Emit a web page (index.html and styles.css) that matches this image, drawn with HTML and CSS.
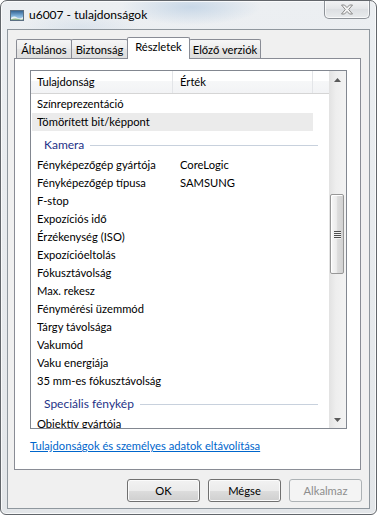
FILE: index.html
```
<!DOCTYPE html>
<html lang="hu">
<head>
<meta charset="utf-8">
<title>u6007 - tulajdonságok</title>
<link rel="stylesheet" href="styles.css">
</head>
<body>
<div class="window">
  <div class="titlebar">
    <svg class="app-icon" width="14" height="11" viewBox="0 0 14 11">
      <defs>
        <linearGradient id="sky" x1="0" y1="0" x2="0" y2="1">
          <stop offset="0" stop-color="#2f5f8e"/>
          <stop offset="0.55" stop-color="#7fb2dc"/>
          <stop offset="1" stop-color="#cfe3f2"/>
        </linearGradient>
      </defs>
      <rect x="0.5" y="0.5" width="13" height="10" fill="url(#sky)" stroke="#5b6f82"/>
      <path d="M1 8 Q4 5.5 7 7.5 T13 7 V10 H1 Z" fill="#e9f1f4"/>
      <path d="M1 9.2 Q5 7.8 9 9 T13 8.6 V10 H1 Z" fill="#8fb48a"/>
    </svg>
    <span class="title">u6007 - tulajdonságok</span>
    <div class="close">
      <svg width="14" height="11" viewBox="0 0 14 11">
        <path d="M1.5 1 H4.5 L7 3.6 L9.5 1 H12.5 L8.7 5.5 L12.5 10 H9.5 L7 7.4 L4.5 10 H1.5 L5.3 5.5 Z" fill="#f4f4f4" stroke="#8a8a8a" stroke-width="1" stroke-linejoin="round"/>
      </svg>
    </div>
  </div>
  <div class="client">
    <div class="tabs">
      <div class="tab tab-general">Általános</div>
      <div class="tab tab-security">Biztonság</div>
      <div class="tab tab-details active">Részletek</div>
      <div class="tab tab-versions">Előző verziók</div>
    </div>
    <div class="panel">
      <div class="listview">
        <div class="lv-main">
          <div class="lv-header">
            <div class="hcol hcol-name">Tulajdonság</div>
            <div class="hcol hcol-value">Érték</div>
            <div class="hfill"></div>
          </div>
          <div class="lv-body">
            <div class="row"><span class="k">Színreprezentáció</span><span class="v"></span></div>
            <div class="row selected"><span class="k">Tömörített bit/képpont</span><span class="v"></span></div>
            <div class="group"><span class="gname">Kamera</span><span class="gline"></span></div>
            <div class="row"><span class="k">Fényképezőgép gyártója</span><span class="v">CoreLogic</span></div>
            <div class="row"><span class="k">Fényképezőgép típusa</span><span class="v">SAMSUNG</span></div>
            <div class="row"><span class="k">F-stop</span><span class="v"></span></div>
            <div class="row"><span class="k">Expozíciós idő</span><span class="v"></span></div>
            <div class="row"><span class="k">Érzékenység (ISO)</span><span class="v"></span></div>
            <div class="row"><span class="k">Expozícióeltolás</span><span class="v"></span></div>
            <div class="row"><span class="k">Fókusztávolság</span><span class="v"></span></div>
            <div class="row"><span class="k">Max. rekesz</span><span class="v"></span></div>
            <div class="row"><span class="k">Fénymérési üzemmód</span><span class="v"></span></div>
            <div class="row"><span class="k">Tárgy távolsága</span><span class="v"></span></div>
            <div class="row"><span class="k">Vakumód</span><span class="v"></span></div>
            <div class="row"><span class="k">Vaku energiája</span><span class="v"></span></div>
            <div class="row"><span class="k">35 mm-es fókusztávolság</span><span class="v"></span></div>
            <div class="group"><span class="gname">Speciális fénykép</span><span class="gline"></span></div>
            <div class="row"><span class="k">Objektív gyártója</span><span class="v"></span></div>
          </div>
        </div>
        <div class="vscroll">
          <div class="sb-btn">
            <svg width="7" height="4" viewBox="0 0 7 4"><path d="M0 4 L3.5 0 L7 4 Z" fill="#5a5a5a"/></svg>
          </div>
          <div class="sb-track">
            <div class="sb-thumb">
              <div class="grip">
                <span></span><span></span><span></span><span></span>
              </div>
            </div>
          </div>
          <div class="sb-btn">
            <svg width="7" height="4" viewBox="0 0 7 4"><path d="M0 0 L7 0 L3.5 4 Z" fill="#5a5a5a"/></svg>
          </div>
        </div>
      </div>
      <a class="link" href="#">Tulajdonságok és személyes adatok eltávolítása</a>
    </div>
    <div class="buttons">
      <div class="btn">OK</div>
      <div class="btn">Mégse</div>
      <div class="btn disabled">Alkalmaz</div>
    </div>
  </div>
</div>
</body>
</html>
```
FILE: styles.css
```
* { box-sizing: border-box; }

html, body {
  margin: 0;
  padding: 0;
  background: #ffffff;
}

body {
  font-family: "Lato", "Liberation Sans", sans-serif;
  font-size: 11.2px;
  color: #000;
}

.window {
  width: 377px;
  height: 515px;
  border: 1px solid #62666b;
  border-radius: 7px 7px 6px 6px;
  background:
    radial-gradient(ellipse 70px 18px at 190px 6px, rgba(170, 196, 222, 0.55), rgba(170, 196, 222, 0)),
    radial-gradient(ellipse 60px 14px at 80px 26px, rgba(190, 208, 226, 0.35), rgba(190, 208, 226, 0)),
    linear-gradient(to bottom, #eceff2, #e3e6e9);
  box-shadow: inset 0 0 0 1px rgba(255, 255, 255, 0.75);
  display: flex;
  flex-direction: column;
  overflow: hidden;
}

/* title bar */
.titlebar {
  height: 28px;
  display: flex;
  align-items: center;
  flex: none;
}

.app-icon {
  margin-left: 9px;
  flex: none;
}

.title {
  margin-left: 5px;
  font-size: 12px;
  color: #000;
  line-height: 16px;
}

.close {
  margin-left: auto;
  margin-right: 6px;
  align-self: flex-start;
  margin-top: -1px;
  width: 46px;
  height: 19px;
  border: 1px solid #8d9298;
  border-top: none;
  border-radius: 0 0 5px 5px;
  background: linear-gradient(to bottom, #f3f4f5, #e3e5e8 50%, #dcdfe2 51%, #e9ebed);
  box-shadow: inset 0 0 0 1px rgba(255, 255, 255, 0.7);
  display: flex;
  align-items: center;
  justify-content: center;
}

/* client area */
.client {
  flex: none;
  margin: 0 6px 5px 6px;
  height: 480px;
  border: 1px solid #8f979e;
  background: #f0f0f0;
  padding: 7px 7px 0 6px;
  display: flex;
  flex-direction: column;
}

/* tabs */
.tabs {
  display: flex;
  align-items: flex-end;
  height: 21px;
  padding-left: 2px;
  flex: none;
}

.tab {
  height: 19px;
  border: 1px solid #898c95;
  border-bottom: none;
  border-radius: 2px 2px 0 0;
  background: linear-gradient(to bottom, #f6f6f6, #ececec 50%, #e4e4e4 51%, #dedede);
  text-align: center;
  line-height: 16px;
  padding-top: 2px;
  white-space: nowrap;
}

.tab + .tab { margin-left: -1px; }

.tab-general { width: 56px; }
.tab-security { width: 57px; }
.tab-details { width: 63px; }
.tab-versions { width: 72px; }

.tab.active {
  height: 22px;
  margin-bottom: -1px;
  background: #ffffff;
  padding-top: 1px;
  position: relative;
  z-index: 1;
}

/* tab panel */
.panel {
  flex: none;
  height: 412px;
  margin-right: 1px;
  border: 1px solid #898c95;
  background: #ffffff;
  padding: 11px 0 0 15px;
}

.listview {
  width: 317px;
  height: 359px;
  border: 1px solid #828790;
  display: flex;
  background: #fff;
}

.lv-main {
  width: 298px;
  display: flex;
  flex-direction: column;
  overflow: hidden;
}

.lv-header {
  height: 23px;
  flex: none;
  display: flex;
  border-bottom: 1px solid #d5d5d5;
  background: linear-gradient(to bottom, #ffffff, #ffffff 45%, #f6f7f8 46%, #f2f3f5);
}

.hcol {
  line-height: 22px;
  white-space: nowrap;
}

.hcol-name {
  width: 142px;
  padding-left: 6px;
  border-right: 1px solid #e3e5e8;
}

.hcol-value {
  width: 140px;
  padding-left: 7px;
  border-right: 1px solid #e3e5e8;
}

.hfill { flex: 1; }

.lv-body {
  flex: 1;
  overflow: hidden;
  padding-top: 1px;
}

.row {
  width: 282px;
  height: 18px;
  line-height: 18px;
  display: flex;
  padding-left: 6px;
  white-space: nowrap;
}

.row.selected {
  background: #ebebeb;
  margin-left: 1px;
  width: 281px;
  padding-left: 5px;
}

.k { width: 143px; flex: none; overflow: hidden; }
.v { flex: 1; }

.group {
  width: 287px;
  height: 25px;
  padding: 5px 0 2px 13px;
  display: flex;
  align-items: center;
  color: #1e3287;
  line-height: 18px;
  font-size: 12px;
}

.gname { white-space: nowrap; }

.gline {
  flex: 1;
  height: 1px;
  margin-left: 6px;
  margin-top: 1px;
  background: #c8d1dd;
}

/* scrollbar */
.vscroll {
  width: 17px;
  display: flex;
  flex-direction: column;
  background: linear-gradient(to right, #e2e2e2, #eeeeee 40%, #f3f3f3);
}

.sb-btn {
  height: 17px;
  flex: none;
  display: flex;
  align-items: center;
  justify-content: center;
}

.sb-track {
  flex: 1;
  padding-top: 106px;
}

.sb-thumb {
  margin-left: 1px;
  width: 14px;
  height: 80px;
  border: 1px solid #979797;
  border-radius: 2px;
  background: linear-gradient(to right, #f7f7f7, #ececec 45%, #dcdcdc 55%, #d2d2d2);
  box-shadow: inset 1px 1px 0 #ffffff;
  display: flex;
  align-items: center;
  justify-content: center;
}

.grip {
  display: flex;
  flex-direction: column;
  gap: 1px;
}

.grip span {
  display: block;
  width: 7px;
  height: 1px;
  background: #4e4e4e;
  box-shadow: 0 1px 0 #f2f2f2;
}

/* link */
.link {
  display: inline-block;
  margin-top: 9px;
  line-height: 16px;
  color: #0066cc;
  text-decoration: underline;
  white-space: nowrap;
}

/* buttons */
.buttons {
  display: flex;
  justify-content: flex-end;
  gap: 8px;
  margin-top: 9px;
}

.btn {
  width: 73px;
  height: 23px;
  border: 1px solid #707070;
  border-radius: 3px;
  background: linear-gradient(to bottom, #f2f2f2, #ebebeb 50%, #dddddd 51%, #cfcfcf);
  box-shadow: inset 0 0 0 1px #fbfbfb;
  text-align: center;
  line-height: 21px;
  color: #000;
}

.btn.disabled {
  border-color: #adb2b5;
  background: #f4f4f4;
  color: #8d8d8d;
  box-shadow: none;
}
```
